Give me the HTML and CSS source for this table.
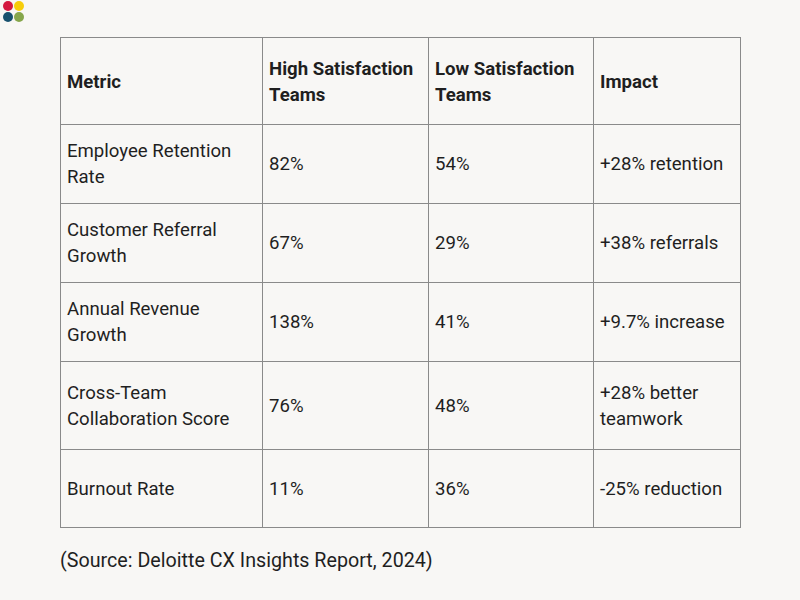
FILE: index.html
```html
<!DOCTYPE html>
<html>
<head>
<meta charset="utf-8">
<link rel="stylesheet" href="styles.css">
</head>
<body>
<div class="logo">
  <span class="dot red"></span><span class="dot yellow"></span>
  <span class="dot teal"></span><span class="dot green"></span>
</div>
<main class="content">
  <table class="data">
    <colgroup>
      <col class="c1"><col class="c2"><col class="c3"><col class="c4">
    </colgroup>
    <thead>
      <tr class="r-head">
        <th>Metric</th>
        <th>High Satisfaction Teams</th>
        <th>Low Satisfaction Teams</th>
        <th>Impact</th>
      </tr>
    </thead>
    <tbody>
      <tr class="r-std">
        <td>Employee Retention Rate</td><td>82%</td><td>54%</td><td>+28% retention</td>
      </tr>
      <tr class="r-std">
        <td>Customer Referral Growth</td><td>67%</td><td>29%</td><td>+38% referrals</td>
      </tr>
      <tr class="r-std">
        <td>Annual Revenue Growth</td><td>138%</td><td>41%</td><td>+9.7% increase</td>
      </tr>
      <tr class="r-tall">
        <td>Cross-Team Collaboration Score</td><td>76%</td><td>48%</td><td>+28% better teamwork</td>
      </tr>
      <tr class="r-last">
        <td>Burnout Rate</td><td>11%</td><td>36%</td><td>-25% reduction</td>
      </tr>
    </tbody>
  </table>
  <p class="source">(Source: Deloitte CX Insights Report, 2024)</p>
</main>
</body>
</html>
```
FILE: styles.css
```css
html, body {
  margin: 0;
  padding: 0;
  background: #f8f7f5;
}
body {
  font-family: Roboto, "Liberation Sans", sans-serif;
  color: #1f1f1f;
  width: 800px;
  height: 600px;
  overflow: hidden;
  position: relative;
}
.logo {
  position: absolute;
  left: 3px;
  top: 1px;
  display: grid;
  grid-template-columns: 10px 10px;
  gap: 1px;
}
.dot {
  width: 10px;
  height: 10px;
  border-radius: 50%;
  display: block;
}
.red { background: #d4183f; }
.yellow { background: #f7cd0a; }
.teal { background: #17516e; }
.green { background: #86a64b; }

.content {
  padding: 37px 0 0 60px;
}
.data {
  border-collapse: collapse;
  width: 680px;
  table-layout: fixed;
  font-size: 18.6px;
  line-height: 26px;
}
.c1 { width: 202px; }
.c2 { width: 166px; }
.c3 { width: 165px; }
.c4 { width: 147px; }
.data th, .data td {
  border: 1px solid #8a8a8a;
  padding: 0 6px;
  text-align: left;
  vertical-align: middle;
  font-weight: 400;
}
.data th {
  font-weight: 700;
  line-height: 26px;
  padding-top: 1px;
}
.r-head { height: 87px; }
.r-std { height: 79px; }
.r-tall { height: 88px; }
.r-last { height: 78px; }
.source {
  margin: 20px 0 0;
  font-size: 19.7px;
  line-height: 26px;
}
```
